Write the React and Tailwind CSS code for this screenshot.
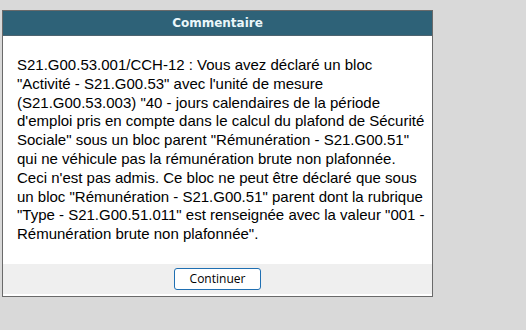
import React from 'react';

const lines = [
  'S21.G00.53.001/CCH-12 : Vous avez déclaré un bloc',
  '"Activité - S21.G00.53" avec l\'unité de mesure',
  '(S21.G00.53.003) "40 - jours calendaires de la période',
  'd\'emploi pris en compte dans le calcul du plafond de Sécurité',
  'Sociale" sous un bloc parent "Rémunération - S21.G00.51"',
  'qui ne véhicule pas la rémunération brute non plafonnée.',
  'Ceci n\'est pas admis. Ce bloc ne peut être déclaré que sous',
  'un bloc "Rémunération - S21.G00.51" parent dont la rubrique',
  '"Type - S21.G00.51.011" est renseignée avec la valeur "001 -',
  'Rémunération brute non plafonnée".',
];

const CommentDialog = () => {
  return (
    <div className="flex w-[431px] h-[287px] flex-col border border-[#6a6a6a] bg-white">
      {/* title bar */}
      <div className="flex h-[25px] items-center justify-center bg-[#2e6278] border-b border-[#4d6470]">
        <span className="text-[12px] font-bold text-[#eaf6fa] font-['DejaVu_Sans',sans-serif]">
          Commentaire
        </span>
      </div>

      {/* message body */}
      <div className="flex-1 pl-[14px] pr-[4px] pt-[20px]">
        <p className="text-[15px] leading-[18.8px] text-black font-['Liberation_Sans',Arial,sans-serif]">
          {lines.map((line, i) => (
            <span key={i} className="block whitespace-nowrap">
              {line}
            </span>
          ))}
        </p>
      </div>

      {/* footer */}
      <div className="flex h-[32px] items-center justify-center bg-[#efefef] border-b-2 border-white">
        <button className="h-[22px] w-[87px] rounded-[3px] border border-[#1f6fb2] bg-white text-[12px] text-black font-['Open_Sans',sans-serif]">
          Continuer
        </button>
      </div>
    </div>
  );
};

export default function App() {
  return (
    <div className="min-h-[330px] w-[526px] bg-[#d9d9d9] pt-[10px] pl-[2px]">
      <CommentDialog />
    </div>
  );
}
